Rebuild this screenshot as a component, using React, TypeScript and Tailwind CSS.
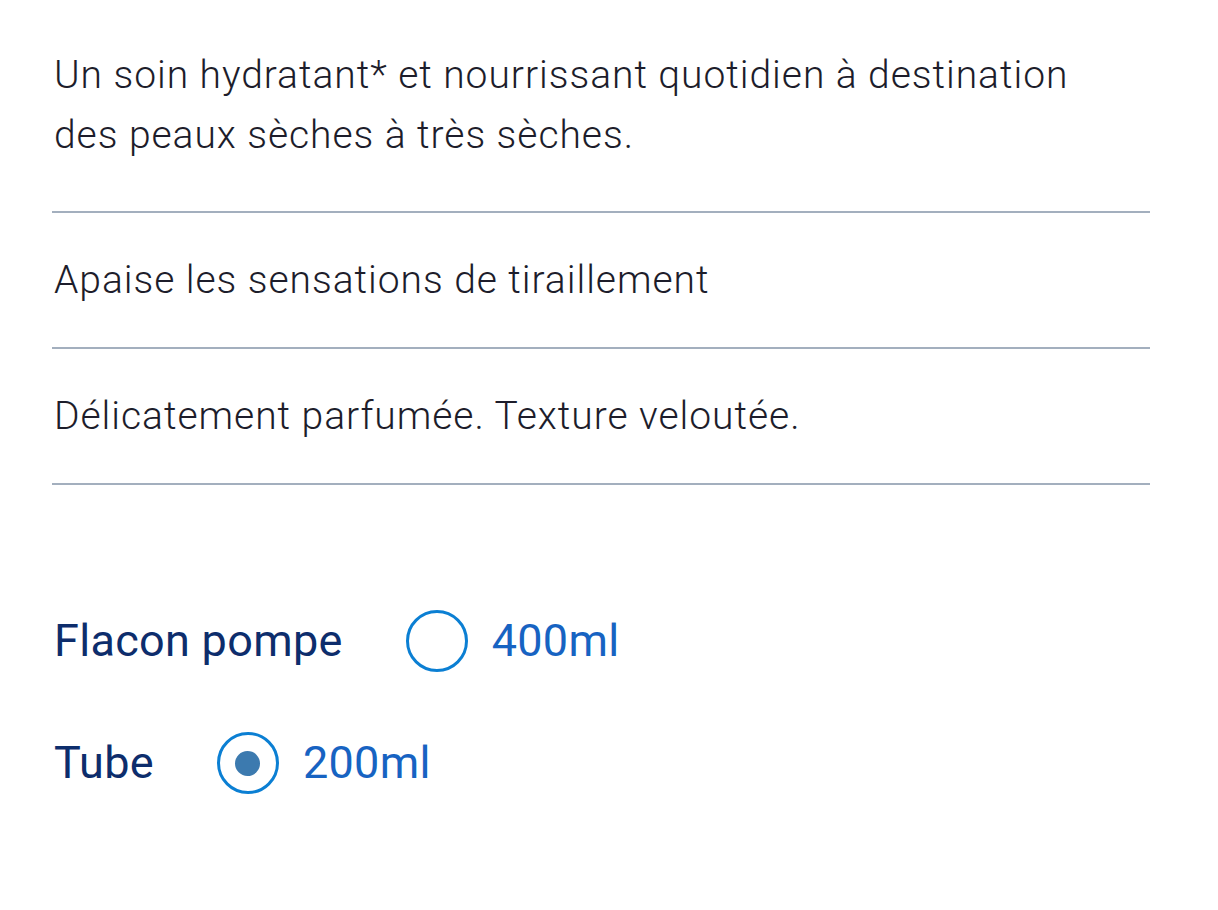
export default function App() {
  const options = [
    { label: 'Flacon pompe', value: '400ml', checked: false },
    { label: 'Tube', value: '200ml', checked: true },
  ];

  return (
    <div className="min-h-screen bg-white font-['Roboto',sans-serif]">
      <div className="pt-[45px] pl-[54px] pr-[68px]">
        <p className="text-[39px] font-light leading-[60px] tracking-[0.95px] text-[#1d1d2b] pb-[46px]">
          Un soin hydratant* et nourrissant quotidien à destination
          <br />
          des peaux sèches à très sèches.
        </p>
        <ul className="border-t-2 border-[#a3afbe] -ml-[2px]">
          <li className="border-b-2 border-[#a3afbe] py-[37px] pl-[2px] text-[39px] font-light leading-[60px] tracking-[0.95px] text-[#1d1d2b]">
            Apaise les sensations de tiraillement
          </li>
          <li className="border-b-2 border-[#a3afbe] py-[37px] pl-[2px] text-[39px] font-light leading-[60px] tracking-[0.95px] text-[#1d1d2b]">
            Délicatement parfumée. Texture veloutée.
          </li>
        </ul>

        <div className="mt-[125px] flex flex-col gap-[60px]">
          {options.map((o) => (
            <div key={o.label} className="flex items-center h-[62px]">
              <span className="text-[45px] tracking-[0.3px] text-[#0d2d6c] mr-[63px]">{o.label}</span>
              <span className="w-[62px] h-[62px] rounded-full border-[3px] border-[#0b7fd3] flex items-center justify-center shrink-0">
                {o.checked && <span className="w-[25px] h-[25px] rounded-full bg-[#3c7aaf]" />}
              </span>
              <span className="ml-[24px] text-[45px] tracking-[0.3px] text-[#1763c2]">{o.value}</span>
            </div>
          ))}
        </div>
      </div>
    </div>
  );
}
